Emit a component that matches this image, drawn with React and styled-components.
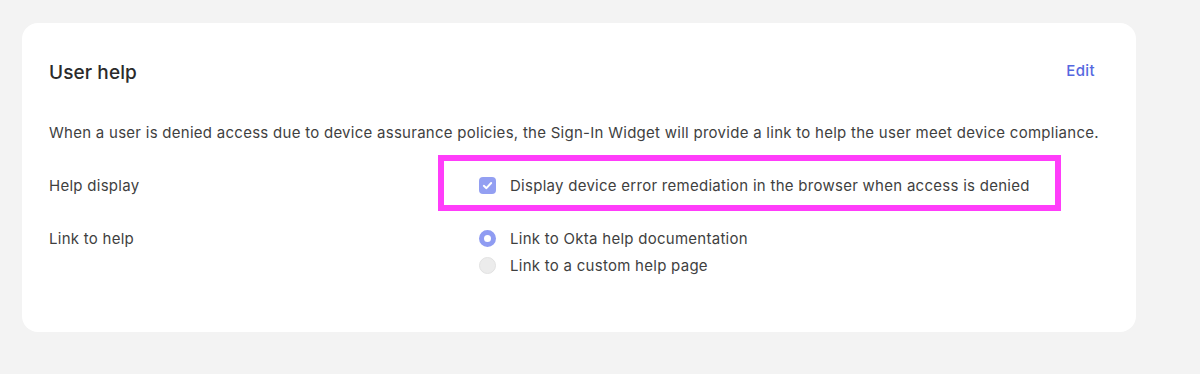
import React from "react";
import styled, { createGlobalStyle } from "styled-components";

const GlobalStyle = createGlobalStyle`
  html, body {
    margin: 0;
    padding: 0;
    background: #f3f3f3;
    font-family: Inter, "Noto Sans", sans-serif;
    color: #3f3f3f;
  }
`;

function CheckIcon() {
  return (
    <svg width="13" height="13" viewBox="0 0 12 12" fill="none">
      <path
        d="M2.6 6.3 L5 8.5 L9.4 3.7"
        stroke="#fff"
        strokeWidth="1.8"
        strokeLinecap="round"
        strokeLinejoin="round"
      />
    </svg>
  );
}

function App() {
  return (
    <>
      <GlobalStyle />
      <Page>
        <Card>
          <Header>
            <Title>User help</Title>
            <EditLink href="#">Edit</EditLink>
          </Header>
          <Description>
            When a user is denied access due to device assurance policies, the
            Sign-In Widget will provide a link to help the user meet device
            compliance.
          </Description>
          <FieldRow $top={29}>
            <Label>Help display</Label>
            <Options>
              <Highlight>
                <Option>
                  <Checkbox>
                    <CheckIcon />
                  </Checkbox>
                  Display device error remediation in the browser when access is
                  denied
                </Option>
              </Highlight>
            </Options>
          </FieldRow>
          <FieldRow $top={26}>
            <Label>Link to help</Label>
            <Options>
              <Option>
                <Radio $checked />
                Link to Okta help documentation
              </Option>
              <Option>
                <Radio />
                Link to a custom help page
              </Option>
            </Options>
          </FieldRow>
        </Card>
      </Page>
    </>
  );
}

const Page = styled.div`
  width: 1200px;
  height: 374px;
  padding: 23px 0 0 22px;
  box-sizing: border-box;
`;

const Card = styled.div`
  width: 1114px;
  height: 309px;
  box-sizing: border-box;
  background: #ffffff;
  border-radius: 16px;
  padding: 36px 41px 0 27px;
`;

const Header = styled.div`
  display: flex;
  justify-content: space-between;
  align-items: center;
  height: 26px;
`;

const Title = styled.h2`
  margin: 0;
  font-size: 19px;
  font-weight: 500;
  color: #2b2b2b;
  letter-spacing: 0.1px;
`;

const EditLink = styled.a`
  font-size: 15px;
  font-weight: 500;
  color: #5568e0;
  text-decoration: none;
  letter-spacing: 0.4px;
  margin-top: -4px;
`;

const Description = styled.p`
  margin: 38px -20px 0 0;
  font-size: 15px;
  line-height: 20px;
  letter-spacing: 0.27px;
  white-space: nowrap;
  color: #3f3f3f;
`;

const FieldRow = styled.div`
  display: grid;
  grid-template-columns: 430px 1fr;
  margin-top: ${(p) => p.$top ?? 24}px;
`;

const Label = styled.div`
  font-size: 15px;
  line-height: 27px;
  letter-spacing: 0.27px;
  color: #3f3f3f;
`;

const Options = styled.div`
  display: flex;
  flex-direction: column;
`;

const Highlight = styled.div`
  position: relative;
  &::after {
    content: "";
    position: absolute;
    left: -41px;
    top: -17px;
    width: 623px;
    height: 56px;
    box-sizing: border-box;
    border: 6px solid #ff3dfa;
    pointer-events: none;
  }
`;

const Option = styled.label`
  display: flex;
  align-items: center;
  gap: 14px;
  font-size: 15px;
  line-height: 27px;
  letter-spacing: 0.27px;
  color: #3f3f3f;
`;

const Checkbox = styled.span`
  width: 17px;
  height: 17px;
  border-radius: 4px;
  background: #939ff2;
  display: inline-flex;
  align-items: center;
  justify-content: center;
  flex-shrink: 0;
`;

const Radio = styled.span`
  width: 17px;
  height: 17px;
  border-radius: 50%;
  box-sizing: border-box;
  flex-shrink: 0;
  background: ${(p) => (p.$checked ? "#ffffff" : "#ececec")};
  border: ${(p) =>
    p.$checked ? "5.5px solid #8f9cf2" : "1px solid #e2e2e2"};
`;

export default App;
